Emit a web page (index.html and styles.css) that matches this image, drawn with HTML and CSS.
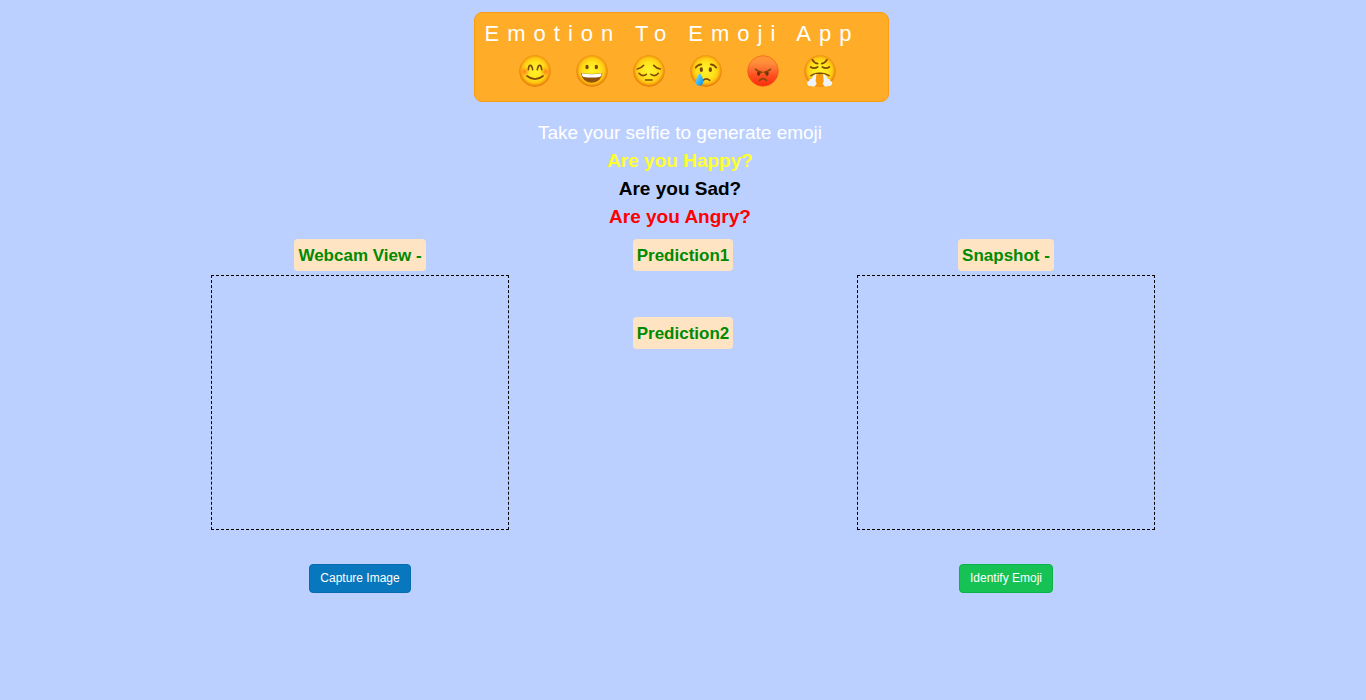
FILE: index.html
```html
<!DOCTYPE html>
<html lang="en">
<head>
<meta charset="utf-8">
<meta name="viewport" content="width=device-width, initial-scale=1">
<title>Emotion To Emoji App</title>
<link rel="stylesheet" href="styles.css">
</head>
<body>
<header class="header">
  <div class="banner">
    <h1 class="banner-title">Emotion To Emoji App</h1>
    <div class="emoji-row">
      <svg class="emoji" viewBox="0 0 96 96" role="img" aria-label="Smiling face">
        <defs>
          <radialGradient id="face" cx="50%" cy="48%" r="52%">
            <stop offset="0" stop-color="#fff22a"/>
            <stop offset=".5" stop-color="#ffe41c"/>
            <stop offset=".76" stop-color="#fec814"/>
            <stop offset=".9" stop-color="#f29a0c"/>
            <stop offset="1" stop-color="#dc6c06"/>
          </radialGradient>
          <radialGradient id="blush">
            <stop offset="0" stop-color="#ff6a1c" stop-opacity=".8"/>
            <stop offset="1" stop-color="#ff8a1c" stop-opacity="0"/>
          </radialGradient>
          <linearGradient id="anger" x1="0" y1="0" x2="0" y2="1">
            <stop offset="0" stop-color="#ff9a34"/>
            <stop offset=".25" stop-color="#ff8c3c"/>
            <stop offset=".65" stop-color="#ff4f22"/>
            <stop offset="1" stop-color="#fb2b0c"/>
          </linearGradient>
          <linearGradient id="tear" x1="0" y1="0" x2="1" y2="1">
            <stop offset="0" stop-color="#9ae4ff"/>
            <stop offset=".5" stop-color="#3db9f5"/>
            <stop offset="1" stop-color="#0f86d8"/>
          </linearGradient>
        </defs>
        <circle cx="48" cy="48" r="47" fill="url(#face)"/>
        <circle cx="17" cy="50" r="16" fill="url(#blush)"/>
        <circle cx="79" cy="50" r="16" fill="url(#blush)"/>
        <g class="stroke">
          <path d="M28 44Q29 31 34 31T41 44M55 44Q57 31 62 31T68 44"/>
          <path d="M24 63Q48 82 72 63"/>
        </g>
      </svg>
      <svg class="emoji" viewBox="0 0 96 96" role="img" aria-label="Grinning face">
        <circle cx="48" cy="48" r="47" fill="url(#face)"/>
        <ellipse cx="33" cy="36" rx="5" ry="7" fill="#7a4508"/>
        <ellipse cx="61" cy="36" rx="5" ry="7" fill="#7a4508"/>
        <path d="M15 54Q47 60 79 54Q75 83 47 83T15 54Z" fill="#925008"/>
        <path d="M17 55Q47 61 77 55Q77 63 71 66Q47 69 23 66Q17 63 17 55Z" fill="#fff"/>
      </svg>
      <svg class="emoji" viewBox="0 0 96 96" role="img" aria-label="Pensive face">
        <circle cx="48" cy="48" r="47" fill="url(#face)"/>
        <g class="stroke">
          <path d="M13 42Q25 40 32 31M62 31Q70 40 82 42"/>
          <path d="M18 55Q28 67 40 58M54 58Q66 67 76 55"/>
          <path d="M38 75H57"/>
        </g>
      </svg>
      <svg class="emoji" viewBox="0 0 96 96" role="img" aria-label="Crying face">
        <circle cx="48" cy="48" r="47" fill="url(#face)"/>
        <ellipse cx="34" cy="44" rx="5" ry="7" fill="#7a4508"/>
        <ellipse cx="61" cy="44" rx="5" ry="7" fill="#7a4508"/>
        <g class="stroke">
          <path d="M17 38Q22 29 34 28M62 28Q73 29 79 38"/>
          <path d="M39 76Q49 67 59 76"/>
        </g>
        <path d="M29 53Q41 70 40 80Q38 92 28 92Q17 91 17 80Q18 70 29 53Z" fill="url(#tear)"/>
      </svg>
      <svg class="emoji" viewBox="0 0 96 96" role="img" aria-label="Angry face">
        <circle cx="48" cy="48" r="46" fill="url(#anger)" stroke="#ee5a14" stroke-width="2"/>
        <ellipse cx="35" cy="55" rx="5" ry="8" fill="#71310a"/>
        <ellipse cx="60" cy="55" rx="5" ry="8" fill="#71310a"/>
        <g class="stroke">
          <path d="M26 43Q33 49 44 52M70 43Q63 49 52 52"/>
          <path d="M38 76Q48 66 58 76"/>
        </g>
      </svg>
      <svg class="emoji" viewBox="0 0 96 96" role="img" aria-label="Face with steam from nose">
        <circle cx="48" cy="48" r="47" fill="url(#face)"/>
        <ellipse cx="48" cy="76" rx="20" ry="19" fill="#f99a0b"/>
        <g class="stroke">
          <path d="M25 14Q30 24 41 26M69 14Q64 24 53 26"/>
          <path d="M20 36Q30 43 41 36M55 36Q66 43 76 36"/>
          <path d="M21 62Q34 53 47 55Q61 53 75 62"/>
        </g>
        <g fill="#eef3fb">
          <path d="M37 57Q27 59 24 71Q17 70 15 77Q8 79 10 87Q13 95 21 92Q29 98 35 91Q40 86 35 79Q36 67 37 57Z"/>
          <path d="M57 57Q67 59 70 71Q77 70 79 77Q86 79 84 87Q81 95 73 92Q65 98 59 91Q54 86 59 79Q58 67 57 57Z"/>
        </g>
      </svg>
    </div>
  </div>
  <div class="intro">
    <p class="line">Take your selfie to generate emoji</p>
    <p class="line line-happy">Are you Happy?</p>
    <p class="line line-sad">Are you Sad?</p>
    <p class="line line-angry">Are you Angry?</p>
  </div>
</header>
<main class="columns">
  <section class="column">
    <h2 class="label">Webcam View -</h2>
    <div class="frame"></div>
    <button class="button button-capture" type="button">Capture Image</button>
  </section>
  <section class="column column-predictions">
    <h2 class="label">Prediction1</h2>
    <h2 class="label">Prediction2</h2>
  </section>
  <section class="column">
    <h2 class="label">Snapshot -</h2>
    <div class="frame"></div>
    <button class="button button-identify" type="button">Identify Emoji</button>
  </section>
</main>
</body>
</html>
```

FILE: styles.css
```css
* {
  box-sizing: border-box;
}

body {
  margin: 0;
  min-height: 100vh;
  background: #bcd0ff;
  font-family: "Liberation Sans", Arial, Helvetica, sans-serif;
}

h1,
h2,
p {
  margin: 0;
}

.header {
  display: flex;
  flex-direction: column;
  align-items: center;
  padding: 12px 3px 0 0;
}

.banner {
  padding: 4px 29px 14px 10px;
  border: 1px solid #fa9d10;
  border-radius: 8px;
  background: #ffac29;
}

.banner-title {
  color: #fff;
  font-size: 22px;
  font-weight: 400;
  line-height: 34px;
  letter-spacing: 8px;
}

.emoji-row {
  display: flex;
  justify-content: center;
  gap: 25px;
  margin-top: 4px;
  padding-left: 11px;
}

.emoji {
  width: 32px;
  height: 32px;
}

.stroke {
  fill: none;
  stroke: #804807;
  stroke-width: 5;
  stroke-linecap: round;
}

.intro {
  padding: 17px 3px 0 0;
  text-align: center;
}

.line {
  color: #fff;
  font-size: 19px;
  line-height: 28px;
}

.line-happy,
.line-sad,
.line-angry {
  font-weight: 700;
}

.line-happy {
  color: #ffff2e;
}

.line-sad {
  color: #000;
}

.line-angry {
  color: #f00;
}

.columns {
  display: grid;
  grid-template-columns: repeat(3, 1fr);
  max-width: 969px;
  margin: 0 auto;
  padding-top: 8px;
}

.column {
  display: flex;
  flex-direction: column;
  align-items: center;
}

.column-predictions {
  gap: 46px;
}

.label {
  padding: 2px 4px 0;
  border-radius: 4px;
  background: #ffe4c4;
  color: #008a00;
  font-size: 17px;
  line-height: 30px;
}

.frame {
  width: 92%;
  height: 255px;
  margin: 4px 0 34px;
  border: 1px dashed #000;
}

.button {
  padding: 0 10px;
  border: 1px solid;
  border-radius: 4px;
  color: #fff;
  font-family: inherit;
  font-size: 12px;
  line-height: 27px;
}

.button-capture {
  border-color: #066caf;
  background: #0877bd;
}

.button-identify {
  border-color: #0bb347;
  background: #17c254;
}
```
